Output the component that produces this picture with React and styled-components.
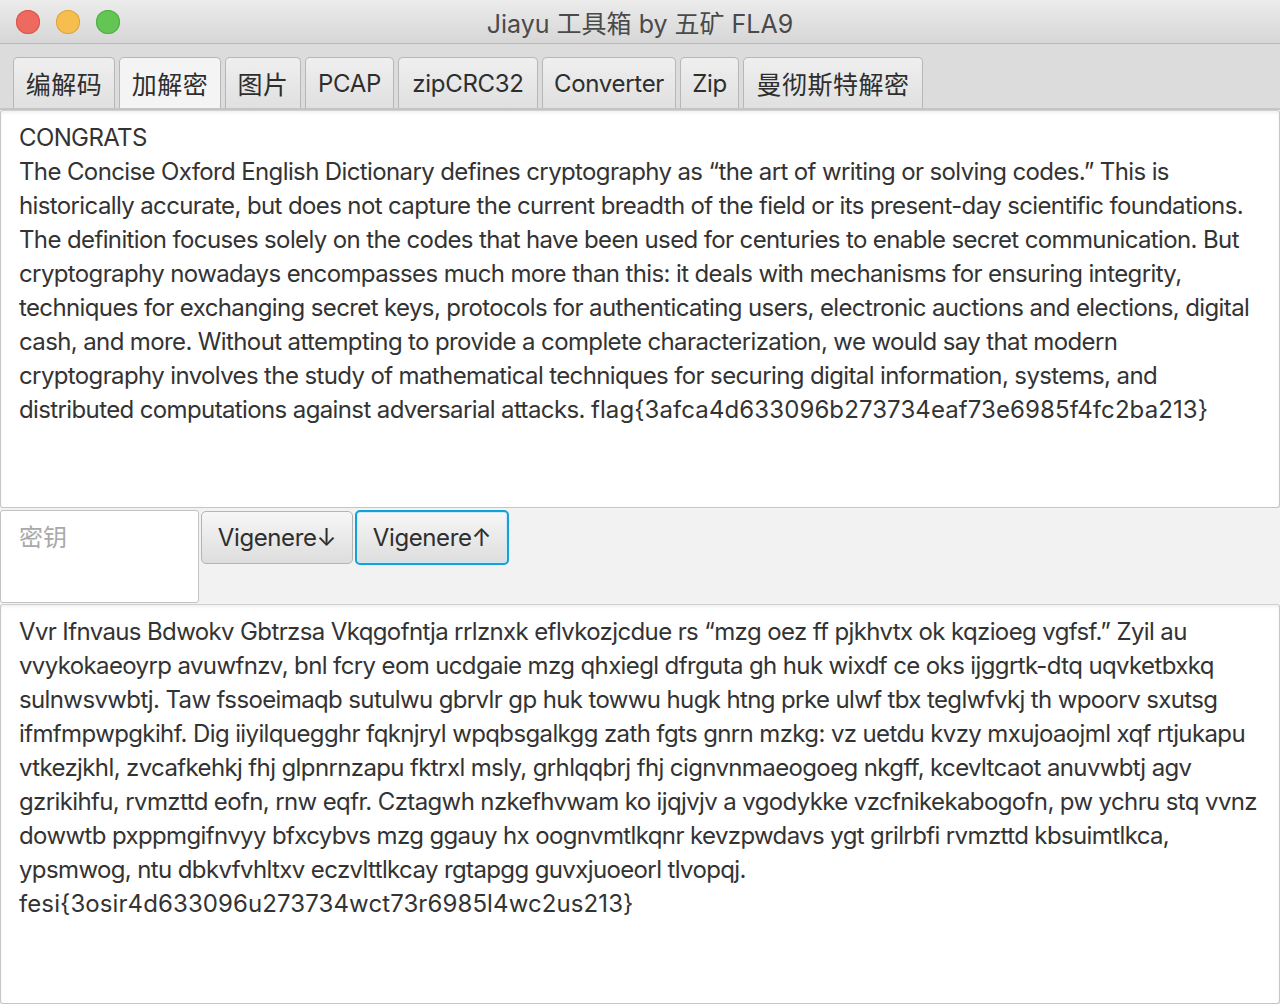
import styled, { createGlobalStyle } from 'styled-components'

const GlobalStyle = createGlobalStyle`
	html, body {
		margin: 0;
		padding: 0;
		background: #ececec;
	}
	body {
		font-family: Inter, "Noto Sans CJK SC", sans-serif;
	}
`

const Window = styled.div`
	width: 1280px;
	height: 1004px;
	display: flex;
	flex-direction: column;
	overflow: hidden;
	background: #f2f2f2;
`

const TitleBar = styled.div`
	position: relative;
	height: 43px;
	flex: none;
	display: flex;
	align-items: center;
	justify-content: center;
	background: linear-gradient(#ececec, #d6d6d6);
	border-bottom: 1px solid #b9b9b9;
`

const Lights = styled.div`
	position: absolute;
	left: 16px;
	top: 10px;
	display: flex;
	gap: 16px;
`

const Light = styled.span`
	width: 24px;
	height: 24px;
	border-radius: 50%;
	background: ${p => p.color};
	box-shadow: inset 0 0 0 1px ${p => p.edge};
`

const Title = styled.div`
	font-size: 25px;
	color: #4a4a4a;
`

const TabHeader = styled.div`
	height: 66px;
	flex: none;
	display: flex;
	align-items: flex-end;
	gap: 4px;
	padding-left: 13px;
	box-sizing: border-box;
	background: #dcdcdc;
	border-bottom: 2px solid #c4c4c4;
`

const Tab = styled.div`
	width: ${p => p.w}px;
	height: 51px;
	box-sizing: border-box;
	display: flex;
	align-items: center;
	justify-content: center;
	font-size: 24px;
	letter-spacing: -0.3px;
	color: #2e2e2e;
	border: 1px solid #b7b7b7;
	border-bottom: none;
	border-radius: 5px 5px 0 0;
	background: ${p => (p.active ? '#f4f4f4' : 'linear-gradient(#efefef, #e0e0e0)')};
`

const Cjk = styled.span`
	font-size: 25px;
	letter-spacing: 0.5px;
`

const TextArea = styled.div`
	height: ${p => p.h}px;
	flex: none;
	box-sizing: border-box;
	background: #fff;
	border-left: 1px solid #c6c6c6;
	border-right: 1px solid #c6c6c6;
	border-top: 1px solid #d0d0d0;
	border-bottom: 1px solid #c6c6c6;
	border-radius: 3px;
	padding: 10px 0 0 18px;
	box-shadow: inset 0 2px 3px rgba(0, 0, 0, 0.06);
	font-size: 24px;
	line-height: 34px;
	color: #333;
`

const Line = styled.div`
	white-space: pre;
	letter-spacing: -0.62px;
`

const Flag = styled.span`
	letter-spacing: 0.1px;
`

const Controls = styled.div`
	height: 96px;
	flex: none;
	display: flex;
	align-items: flex-start;
	gap: 2px;
	padding-top: 2px;
	box-sizing: border-box;
`

const KeyField = styled.div`
	width: 199px;
	height: 93px;
	box-sizing: border-box;
	background: #fff;
	border: 1px solid #c2c2c2;
	border-radius: 3px;
	padding: 7px 18px;
	font-size: 24px;
	color: #a9a9a9;
`

const Button = styled.div`
	width: ${p => (p.focused ? 154 : 152)}px;
	height: ${p => (p.focused ? 55 : 53)}px;
	margin-top: ${p => (p.focused ? 0 : 1)}px;
	box-sizing: border-box;
	display: flex;
	align-items: center;
	justify-content: center;
	font-size: 24px;
	letter-spacing: -0.4px;
	color: #2e2e2e;
	border-radius: 5px;
	background: linear-gradient(#f7f7f7, #dddddd);
	border: ${p => (p.focused ? '2px solid #12a1d8' : '1px solid #b4b4b4')};
	box-shadow: ${p => (p.focused ? 'inset 0 0 0 1px #cfe9f5' : 'none')};
`

const tabs = [
	{ label: '编解码', w: 102, cjk: true },
	{ label: '加解密', w: 102, cjk: true, active: true },
	{ label: '图片', w: 76, cjk: true },
	{ label: 'PCAP', w: 89 },
	{ label: 'zipCRC32', w: 140 },
	{ label: 'Converter', w: 134 },
	{ label: 'Zip', w: 59 },
	{ label: '曼彻斯特解密', w: 180, cjk: true },
]

const plain = [
	'CONGRATS',
	'The Concise Oxford English Dictionary defines cryptography as “the art of writing or solving codes.” This is',
	'historically accurate, but does not capture the current breadth of the field or its present-day scientific foundations.',
	'The definition focuses solely on the codes that have been used for centuries to enable secret communication. But',
	'cryptography nowadays encompasses much more than this: it deals with mechanisms for ensuring integrity,',
	'techniques for exchanging secret keys, protocols for authenticating users, electronic auctions and elections, digital',
	'cash, and more. Without attempting to provide a complete characterization, we would say that modern',
	'cryptography involves the study of mathematical techniques for securing digital information, systems, and',
]
const plainTail = 'distributed computations against adversarial attacks. '
const plainFlag = 'flag{3afca4d633096b273734eaf73e6985f4fc2ba213}'

const cipher = [
	'Vvr Ifnvaus Bdwokv Gbtrzsa Vkqgofntja rrlznxk eflvkozjcdue rs “mzg oez ff pjkhvtx ok kqzioeg vgfsf.” Zyil au',
	'vvykokaeoyrp avuwfnzv, bnl fcry eom ucdgaie mzg qhxiegl dfrguta gh huk wixdf ce oks ijggrtk-dtq uqvketbxkq',
	'sulnwsvwbtj. Taw fssoeimaqb sutulwu gbrvlr gp huk towwu hugk htng prke ulwf tbx teglwfvkj th wpoorv sxutsg',
	'ifmfmpwpgkihf. Dig iiyilquegghr fqknjryl wpqbsgalkgg zath fgts gnrn mzkg: vz uetdu kvzy mxujoaojml xqf rtjukapu',
	'vtkezjkhl, zvcafkehkj fhj glpnrnzapu fktrxl msly, grhlqqbrj fhj cignvnmaeogoeg nkgff, kcevltcaot anuvwbtj agv',
	'gzrikihfu, rvmzttd eofn, rnw eqfr. Cztagwh nzkefhvwam ko ijqjvjv a vgodykke vzcfnikekabogofn, pw ychru stq vvnz',
	'dowwtb pxppmgifnvyy bfxcybvs mzg ggauy hx oognvmtlkqnr kevzpwdavs ygt grilrbfi rvmzttd kbsuimtlkca,',
	'ypsmwog, ntu dbkvfvhltxv eczvlttlkcay rgtapgg guvxjuoeorl tlvopqj.',
]
const cipherFlag = 'fesi{3osir4d633096u273734wct73r6985l4wc2us213}'

export default function App() {
	return (
		<Window>
			<GlobalStyle />
			<TitleBar>
				<Lights>
					<Light color="#ee6a5f" edge="#d9554b" />
					<Light color="#f5be4f" edge="#dea43a" />
					<Light color="#62c554" edge="#4fae42" />
				</Lights>
				<Title>Jiayu 工具箱 by 五矿 FLA9</Title>
			</TitleBar>
			<TabHeader>
				{tabs.map(t => (
					<Tab key={t.label} w={t.w} active={t.active}>
						{t.cjk ? <Cjk>{t.label}</Cjk> : t.label}
					</Tab>
				))}
			</TabHeader>
			<TextArea h={398}>
				{plain.map((l, i) => (
					<Line key={i}>{l}</Line>
				))}
				<Line>
					{plainTail}
					<Flag>{plainFlag}</Flag>
				</Line>
			</TextArea>
			<Controls>
				<KeyField>密钥</KeyField>
				<Button>Vigenere↓</Button>
				<Button focused>Vigenere↑</Button>
			</Controls>
			<TextArea h={400}>
				{cipher.map((l, i) => (
					<Line key={i}>{l}</Line>
				))}
				<Line>
					<Flag>{cipherFlag}</Flag>
				</Line>
			</TextArea>
		</Window>
	)
}
